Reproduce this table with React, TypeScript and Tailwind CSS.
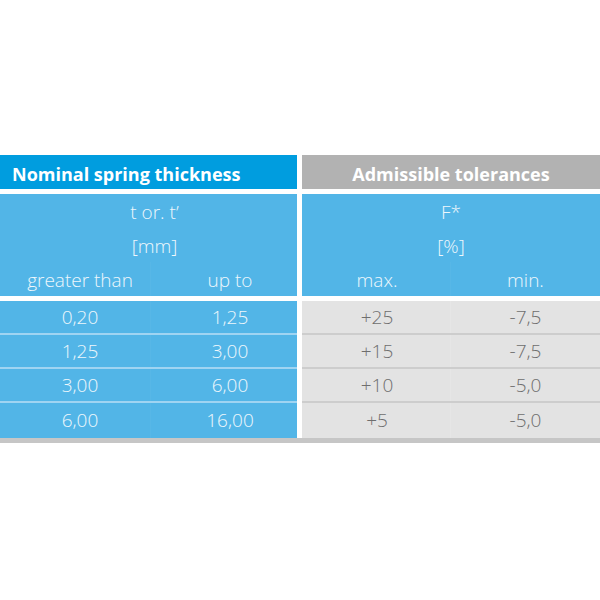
import React from "react";

const rows = [
  ["0,20", "1,25", "+25", "-7,5"],
  ["1,25", "3,00", "+15", "-7,5"],
  ["3,00", "6,00", "+10", "-5,0"],
  ["6,00", "16,00", "+5", "-5,0"],
];

export default function App() {
  return (
    <div
      className="w-[600px] h-[600px] bg-white pt-[155px]"
      style={{ fontFamily: '"Open Sans", "Noto Sans", sans-serif' }}
    >
      <div className="flex gap-[5px]">
        {/* Left section */}
        <div className="w-[297px] flex flex-col">
          <div className="h-[34px] bg-[#009ddf] flex items-center pl-[12px] pt-[3px] text-white font-bold text-[18px] leading-none">
            Nominal spring thickness
          </div>
          <div className="mt-[5px] h-[102px] bg-[#52b5e7] text-[#eef7fc] font-light text-[19px] flex flex-col">
            <div className="h-[34px] flex items-center justify-center pl-[12px] pt-[2px]">t or. t’</div>
            <div className="h-[34px] flex items-center justify-center pl-[12px] pt-[2px]">[mm]</div>
            <div className="h-[34px] flex">
              <div className="w-[150px] flex items-center justify-center pl-[10px] pt-[2px]">greater than</div>
              <div className="w-[147px] flex items-center justify-center pl-[12px] pt-[2px] border-l border-white/[0.03]">up to</div>
            </div>
          </div>
          <div className="mt-[5px] flex flex-col text-[#eef7fc] font-light text-[19px]">
            {rows.map((r, i) => (
              <div
                key={i}
                className={`flex bg-[#52b5e7] ${i < 3 ? "h-[34px] border-b-2 border-[#9fd4f2]" : "h-[35px]"}`}
              >
                <div className="w-[150px] flex items-center justify-center pl-[10px]">{r[0]}</div>
                <div className="w-[147px] flex items-center justify-center pl-[12px] border-l border-white/[0.03]">{r[1]}</div>
              </div>
            ))}
          </div>
        </div>
        {/* Right section */}
        <div className="w-[298px] flex flex-col">
          <div className="h-[34px] bg-[#b2b2b2] flex items-center justify-center pt-[3px] text-white font-bold text-[18px] leading-none">
            Admissible tolerances
          </div>
          <div className="mt-[5px] h-[102px] bg-[#52b5e7] text-[#eef7fc] font-light text-[19px] flex flex-col">
            <div className="h-[34px] flex items-center justify-center pt-[2px]">F*</div>
            <div className="h-[34px] flex items-center justify-center pt-[2px]">[%]</div>
            <div className="h-[34px] flex">
              <div className="w-[148px] flex items-center justify-center pl-[2px] pt-[2px]">max.</div>
              <div className="w-[150px] flex items-center justify-center pt-[2px] border-l border-white/[0.03]">min.</div>
            </div>
          </div>
          <div className="mt-[5px] flex flex-col text-[#6e6e6e] font-light text-[19px]">
            {rows.map((r, i) => (
              <div
                key={i}
                className={`flex bg-[#e3e3e3] ${i < 3 ? "h-[34px] border-b-2 border-[#cdcdcd]" : "h-[35px]"}`}
              >
                <div className="w-[148px] flex items-center justify-center pl-[2px]">{r[2]}</div>
                <div className="w-[150px] flex items-center justify-center border-l border-white/10">{r[3]}</div>
              </div>
            ))}
          </div>
        </div>
      </div>
      <div className="h-[5px] bg-[#c6c6c6]" />
    </div>
  );
}
